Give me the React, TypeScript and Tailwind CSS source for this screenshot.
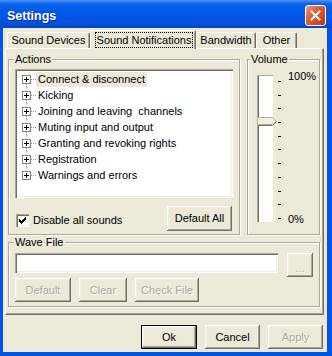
import * as React from "react"

const raised =
  "shadow-[inset_-1px_-1px_#716f64,inset_1px_1px_#fff,inset_-2px_-2px_#aca899,inset_2px_2px_#f1efe2]"
const sunken =
  "shadow-[inset_1px_1px_#aca899,inset_2px_2px_#716f64,inset_-1px_-1px_#fff,inset_-2px_-2px_#f1efe2]"

const actions = [
  "Connect & disconnect",
  "Kicking",
  "Joining and leaving  channels",
  "Muting input and output",
  "Granting and revoking rights",
  "Registration",
  "Warnings and errors",
]

function Btn({
  className = "",
  disabled = false,
  isDefault = false,
  children,
}: {
  className?: string
  disabled?: boolean
  isDefault?: boolean
  children: React.ReactNode
}) {
  return (
    <button
      type="button"
      className={`${className} ${isDefault ? "border border-black" : ""} ${raised} flex items-center justify-center bg-[#ece9d8] leading-[13px] ${
        disabled ? "text-[#aca899] [text-shadow:1px_1px_0_#fff]" : "text-black"
      }`}
    >
      {children}
    </button>
  )
}

function Tab({ className, children }: { className: string; children: React.ReactNode }) {
  return (
    <div
      className={`${className} h-[16px] flex items-center justify-center border-l border-t border-white border-r border-r-[#716f64] rounded-t-[2px] shadow-[inset_-1px_0_#aca899] leading-[13px] whitespace-nowrap`}
    >
      {children}
    </div>
  )
}

// tree expander with dotted connecting lines
function Expander({ first, last }: { first: boolean; last: boolean }) {
  return (
    <svg width="19" height="16" viewBox="0 0 19 16" className="shrink-0">
      {!first && <line x1="9.5" y1="0" x2="9.5" y2="4" stroke="#a0a0a0" strokeDasharray="1 1" />}
      {!last && <line x1="9.5" y1="13" x2="9.5" y2="16" stroke="#a0a0a0" strokeDasharray="1 1" />}
      <line x1="14" y1="8.5" x2="19" y2="8.5" stroke="#a0a0a0" strokeDasharray="1 1" />
      <rect x="5.5" y="4.5" width="8" height="8" fill="#fff" stroke="#808080" />
      <path d="M7 8.5h5M9.5 6v5" stroke="#000" />
    </svg>
  )
}

export default function App() {
  return (
    <div className="w-[332px] h-[356px] flex flex-col bg-[#0055e5] font-['Liberation_Sans',Arial,sans-serif] text-[11px] text-black select-none">
      {/* title bar */}
      <div className="h-[28px] shrink-0 flex items-start justify-between pl-[7px] pr-[6px] bg-[linear-gradient(180deg,#4a93f7_0%,#0a62ec_14%,#0058e6_45%,#0053df_80%,#0046c9_100%)]">
        <span className="mt-[8px] text-white font-bold text-[12.5px] leading-[16px] [text-shadow:1px_1px_0_#0a2a8a]">
          Settings
        </span>
        <div className="mt-[5px] w-[21px] h-[21px] rounded-[3px] border border-white bg-[linear-gradient(135deg,#eea08a_0%,#e2643f_35%,#cf4422_75%,#b8351a_100%)] flex items-center justify-center">
          <svg width="11" height="11" viewBox="0 0 11 11">
            <path d="M1.5 1.5l8 8M9.5 1.5l-8 8" stroke="#fff" strokeWidth="2" strokeLinecap="square" />
          </svg>
        </div>
      </div>

      <div className="flex-1 ml-[3px] mr-[5px] mb-[4px] bg-[#ece9d8] flex flex-col">
        {/* tabs */}
        <div className="h-[20px] shrink-0 flex items-end pl-[4px] relative z-10">
          <Tab className="w-[83px]">Sound Devices</Tab>
          <div className="w-[106px] h-[19px] -mb-px bg-[#ece9d8] flex items-start pl-[4px] pt-[1px] border-l border-t border-white border-r border-r-[#716f64] rounded-t-[2px] shadow-[inset_-1px_0_#aca899]">
            <span className="w-[98px] h-[16px] border border-dotted border-black flex items-center justify-center leading-[13px] whitespace-nowrap">
              Sound Notifications
            </span>
          </div>
          <Tab className="w-[60px]">Bandwidth</Tab>
          <Tab className="w-[41px]">Other</Tab>
        </div>

        {/* tab panel */}
        <div className="ml-[2px] w-[319px] h-[267px] shrink-0 border border-t-white border-l-white border-r-[#716f64] border-b-[#716f64] shadow-[inset_-1px_-1px_#aca899] pl-[2px] pr-[3px] pt-[4px] flex flex-col gap-[1px]">
          <div className="flex gap-[7px]">
            {/* Actions */}
            <fieldset className="w-[232px] border border-[#aca899] shadow-[inset_1px_1px_#fff,1px_1px_#fff] px-[6px] pb-[3px]">
              <legend className="-ml-px px-[1px] leading-[13px] bg-[#ece9d8]">Actions</legend>
              <div className={`mt-[3px] w-[218px] h-[129px] bg-white ${sunken} pt-[2px] pl-[2px]`}>
                {actions.map((a, i) => (
                  <div key={a} className="h-[16px] flex items-center whitespace-pre">
                    <Expander first={i === 0} last={i === actions.length - 1} />
                    <span className={`px-[2px] leading-[15px] ${i === 0 ? "bg-[#ece9d8]" : ""}`}>{a}</span>
                  </div>
                ))}
              </div>
              <div className="mt-[8px] flex items-center justify-between">
                <label className="ml-[1px] mt-[3px] flex items-center gap-[4px]">
                  <span className={`w-[13px] h-[13px] bg-white ${sunken} flex items-center justify-center`}>
                    <svg width="7" height="7" viewBox="0 0 7 7" shapeRendering="crispEdges">
                      <path
                        d="M6 0h1v1h-1zM5 1h2v1h-2zM0 2h1v1h-1zM4 2h3v1h-3zM0 3h2v1h-2zM3 3h3v1h-3zM0 4h5v1h-5zM1 5h3v1h-3zM2 6h1v1h-1z"
                        fill="#000"
                      />
                    </svg>
                  </span>
                  <span className="leading-[13px]">Disable all sounds</span>
                </label>
                <Btn className="w-[65px] h-[25px] mr-[1px]">Default All</Btn>
              </div>
            </fieldset>

            {/* Volume */}
            <fieldset className="w-[73px] border border-[#aca899] shadow-[inset_1px_1px_#fff,1px_1px_#fff]">
              <legend className="ml-[2px] px-[1px] leading-[13px] bg-[#ece9d8]">Volume</legend>
              <div className="flex items-start pl-[9px]">
                <div className="relative mt-[9px] w-[16px] h-[147px] bg-white shadow-[inset_1px_1px_#aca899,inset_2px_0_#716f64]">
                  <svg width="21" height="10" viewBox="0 0 21 10" className="absolute left-0 top-[42px]">
                    <path d="M0 0h15l4.5 4.5L15 9H0z" fill="#f1efe2" />
                    <path d="M0.5 8.5V0.5H15.5L19.5 4.5" fill="none" stroke="#b5b2a5" />
                    <path d="M0.5 8.5H15.5L19.5 4.5" fill="none" stroke="#716f64" />
                    <path d="M1.5 7.5H15L18 4.5" fill="none" stroke="#aca899" />
                  </svg>
                </div>
                <div className="ml-[5px] mt-[15px] h-[138px] flex flex-col justify-between">
                  {Array.from({ length: 11 }).map((_, i) => (
                    <div key={i} className="w-[3px] h-[1px] bg-black" />
                  ))}
                </div>
                <div className="ml-[7px] mt-[4px] h-[156px] flex flex-col justify-between leading-[13px]">
                  <span>100%</span>
                  <span>0%</span>
                </div>
              </div>
            </fieldset>
          </div>

          {/* Wave File */}
          <fieldset className="border border-[#aca899] shadow-[inset_1px_1px_#fff,1px_1px_#fff] px-[6px] pb-[4px]">
            <legend className="-ml-px px-[1px] leading-[13px] bg-[#ece9d8]">Wave File</legend>
            <div className="mt-[4px] flex items-start">
              <div className={`w-[263px] h-[20px] bg-white ${sunken}`} />
              <Btn disabled className="ml-[9px] w-[26px] h-[24px]">
                <span className="mt-[6px]">...</span>
              </Btn>
            </div>
            <div className="mt-[1px] flex gap-[8px]">
              <Btn disabled className="w-[56px] h-[24px]">Default</Btn>
              <Btn disabled className="w-[48px] h-[24px]">Clear</Btn>
              <Btn disabled className="w-[64px] h-[24px]">Check File</Btn>
            </div>
          </fieldset>
        </div>

        {/* dialog buttons */}
        <div className="mt-[10px] flex justify-end gap-[8px] pr-[4px]">
          <Btn isDefault className="w-[56px] h-[24px]">Ok</Btn>
          <Btn className="w-[55px] h-[24px]">Cancel</Btn>
          <Btn disabled className="w-[55px] h-[24px]">Apply</Btn>
        </div>
      </div>
    </div>
  )
}
